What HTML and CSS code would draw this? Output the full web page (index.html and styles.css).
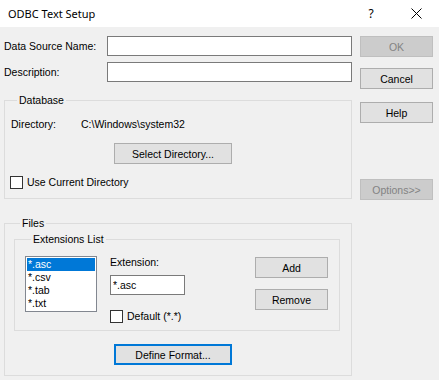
FILE: index.html
```html
<!DOCTYPE html>
<html>
<head>
<meta charset="utf-8">
<link rel="stylesheet" href="styles.css">
</head>
<body>
<div class="window">
  <div class="titlebar">
    <span class="title">ODBC Text Setup</span>
    <span class="caption-btn help-cap">?</span>
    <span class="caption-btn close-cap">
      <svg width="11" height="11" viewBox="0 0 11 11"><path d="M0.5 0.5 L10.5 10.5 M10.5 0.5 L0.5 10.5" stroke="#000" stroke-width="1" fill="none"/></svg>
    </span>
  </div>
  <div class="content">
    <div class="left">
      <div class="field-row">
        <span class="field-label">Data Source Name:</span>
        <input class="text-input wide" type="text" value="">
      </div>
      <div class="field-row second">
        <span class="field-label">Description:</span>
        <input class="text-input wide" type="text" value="">
      </div>
      <fieldset class="group db-group">
        <legend>Database</legend>
        <div class="dir-row">
          <span class="dir-label">Directory:</span>
          <span class="dir-value">C:\Windows\system32</span>
        </div>
        <button class="btn select-dir">Select Directory...</button>
        <div class="check-row">
          <span class="checkbox"></span>
          <span>Use Current Directory</span>
        </div>
      </fieldset>
      <fieldset class="group files-group">
        <legend>Files</legend>
        <fieldset class="group ext-group">
          <legend>Extensions List</legend>
          <div class="ext-body">
            <ul class="listbox">
              <li class="selected">*.asc</li>
              <li>*.csv</li>
              <li>*.tab</li>
              <li>*.txt</li>
            </ul>
            <div class="ext-col">
              <div class="ext-label">Extension:</div>
              <input class="text-input ext-input" type="text" value="*.asc">
              <div class="check-row default-row">
                <span class="checkbox"></span>
                <span>Default (*.*)</span>
              </div>
            </div>
            <div class="ext-btns">
              <button class="btn side-btn">Add</button>
              <button class="btn side-btn remove-btn">Remove</button>
            </div>
          </div>
        </fieldset>
        <button class="btn define-btn">Define Format...</button>
      </fieldset>
    </div>
    <div class="right">
      <button class="btn side-btn disabled">OK</button>
      <button class="btn side-btn cancel-btn">Cancel</button>
      <button class="btn side-btn help-btn">Help</button>
      <button class="btn side-btn disabled options-btn">Options&gt;&gt;</button>
    </div>
  </div>
</div>
</body>
</html>
```

FILE: styles.css
```css
* { box-sizing: border-box; }
html, body { margin: 0; padding: 0; }
body {
  width: 439px;
  height: 380px;
  overflow: hidden;
  background: #f0f0f0;
  font-family: "Liberation Sans", Arial, sans-serif;
  font-size: 10.5px;
  color: #000;
}
.window { width: 439px; height: 380px; }

.titlebar {
  height: 27px;
  background: #fff;
  display: flex;
  align-items: center;
}
.title {
  font-family: "Noto Sans", "Open Sans", sans-serif;
  font-size: 11px;
  padding-left: 8px;
  flex: 1;
}
.caption-btn {
  display: flex;
  align-items: center;
  justify-content: center;
  height: 27px;
}
.help-cap {
  width: 44px;
  font-family: "Noto Sans", sans-serif;
  font-size: 12px;
}
.close-cap { width: 46px; }

.content {
  display: flex;
  padding: 9px 0 0 4px;
}
.left { width: 348px; }
.right {
  margin-left: 8px;
  width: 73px;
  display: flex;
  flex-direction: column;
}

.field-row {
  display: flex;
  align-items: center;
  height: 20px;
}
.field-row.second { margin-top: 6px; }
.field-label { width: 103px; }

.text-input {
  height: 20px;
  border: 1px solid #7a7a7a;
  background: #fff;
  font: inherit;
  padding: 0 2px;
  margin: 0;
  outline: none;
}
.text-input.wide { width: 245px; }

.group {
  margin: 0;
  padding: 0;
  border: 1px solid #dcdcdc;
  min-width: 0;
}
.group legend {
  padding: 0 2px;
  margin-left: 6px;
  line-height: 13px;
}

.db-group {
  margin-top: 12px;
  padding: 0 0 9px 6px;
}
.dir-row {
  display: flex;
  margin-top: 11px;
  line-height: 13px;
}
.dir-label { width: 70px; }

.btn {
  font: inherit;
  color: #000;
  background: #e1e1e1;
  border: 1px solid #adadad;
  height: 21px;
  padding: 0;
  margin: 0;
  display: block;
}
.btn.disabled {
  background: #cccccc;
  border-color: #bfbfbf;
  color: #838383;
}
.select-dir {
  width: 118px;
  margin: 12px 0 0 103px;
}
.check-row {
  display: flex;
  align-items: center;
  margin-top: 12px;
  line-height: 13px;
  margin-left: -1px;
}
.checkbox {
  width: 13px;
  height: 13px;
  border: 1px solid #333;
  background: #fff;
  margin-right: 4px;
  flex: none;
}

.files-group {
  margin-top: 18px;
  padding: 0 0 10px 9px;
}
.ext-group {
  width: 326px;
  margin-top: 3px;
  padding: 0 0 7px 10px;
}
.ext-body {
  display: flex;
  align-items: flex-start;
}
.listbox {
  list-style: none;
  margin: 10px 0 0 0;
  padding: 1px;
  width: 72px;
  height: 56px;
  border: 1px solid #828790;
  background: #fff;
}
.listbox li {
  height: 13px;
  line-height: 13px;
  padding-left: 1px;
}
.listbox li.selected {
  background: #0078d7;
  color: #fff;
}
.ext-col {
  margin-left: 13px;
  display: flex;
  flex-direction: column;
}
.ext-label {
  margin-top: 10px;
  line-height: 13px;
}
.ext-input {
  width: 75px;
  margin-top: 6px;
}
.default-row {
  margin-top: 15px;
  margin-left: 0;
}
.ext-btns {
  margin-left: 70px;
  margin-top: 11px;
}
.side-btn { width: 73px; }
.remove-btn { margin-top: 11px; }
.define-btn {
  width: 118px;
  margin: 13px 0 0 100px;
  border: 2px solid #0078d7;
}

.cancel-btn { margin-top: 11px; }
.help-btn { margin-top: 13px; }
.options-btn { margin-top: 56px; }
```
